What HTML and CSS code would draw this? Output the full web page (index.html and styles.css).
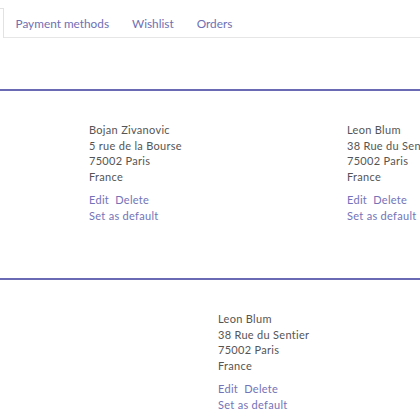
FILE: index.html
```html
<!DOCTYPE html>
<html>
<head>
<meta charset="utf-8">
<link rel="stylesheet" href="styles.css">
</head>
<body>
<div class="page">
  <nav class="tabs">
    <span class="tab tab-active"></span>
    <a class="tab">Payment methods</a>
    <a class="tab">Wishlist</a>
    <a class="tab">Orders</a>
  </nav>
  <section class="row">
    <div class="card">
      <div class="addr">
        <div>Bojan Zivanovic</div>
        <div>5 rue de la Bourse</div>
        <div>75002 Paris</div>
        <div>France</div>
      </div>
      <div class="actions">
        <div><a>Edit</a> <a>Delete</a></div>
        <div><a>Set as default</a></div>
      </div>
    </div>
    <div class="card empty"></div>
    <div class="card">
      <div class="addr">
        <div>Leon Blum</div>
        <div>38 Rue du Sentier</div>
        <div>75002 Paris</div>
        <div>France</div>
      </div>
      <div class="actions">
        <div><a>Edit</a> <a>Delete</a></div>
        <div><a>Set as default</a></div>
      </div>
    </div>
  </section>
  <section class="row">
    <div class="card empty"></div>
    <div class="card">
      <div class="addr">
        <div>Leon Blum</div>
        <div>38 Rue du Sentier</div>
        <div>75002 Paris</div>
        <div>France</div>
      </div>
      <div class="actions">
        <div><a>Edit</a> <a>Delete</a></div>
        <div><a>Set as default</a></div>
      </div>
    </div>
    <div class="card empty"></div>
  </section>
</div>
</body>
</html>
```
FILE: styles.css
```css
html, body {
  margin: 0;
  padding: 0;
  background: #ffffff;
}
.page {
  width: 420px;
  height: 420px;
  overflow: hidden;
  font-family: "Lato", "Open Sans", sans-serif;
  color: #555555;
}
.tabs {
  display: flex;
  align-items: flex-end;
  border-bottom: 1px solid #e6e6e6;
  padding-top: 8px;
  box-sizing: border-box;
  height: 38px;
  white-space: nowrap;
}
.tab {
  display: block;
  padding: 0 11.5px;
  height: 29px;
  line-height: 31px;
  font-size: 11.8px;
  color: #6f6fb3;
  box-sizing: border-box;
}
.tab-active {
  width: 4px;
  padding: 0;
  border-right: 1px solid #e2e2e2;
  border-top: 1px solid #e2e2e2;
  background: #fff;
  margin-bottom: -1px;
  height: 30px;
}
.row {
  border-top: 2px solid #6a6ab4;
  margin-top: 51px;
  padding: 31px 0 0 89px;
  display: grid;
  grid-template-columns: repeat(3, 129px);
  height: 156px;
  box-sizing: content-box;
}
.row + .row {
  margin-top: 0;
}
.card {
  font-size: 11px;
  line-height: 15.5px;
  letter-spacing: 0.3px;
  white-space: nowrap;
}
.addr {
  color: #555555;
}
.actions {
  margin-top: 8px;
  color: #7373b8;
}
.actions a {
  color: #7373b8;
}
.actions a + a {
  margin-left: 3px;
}
```
